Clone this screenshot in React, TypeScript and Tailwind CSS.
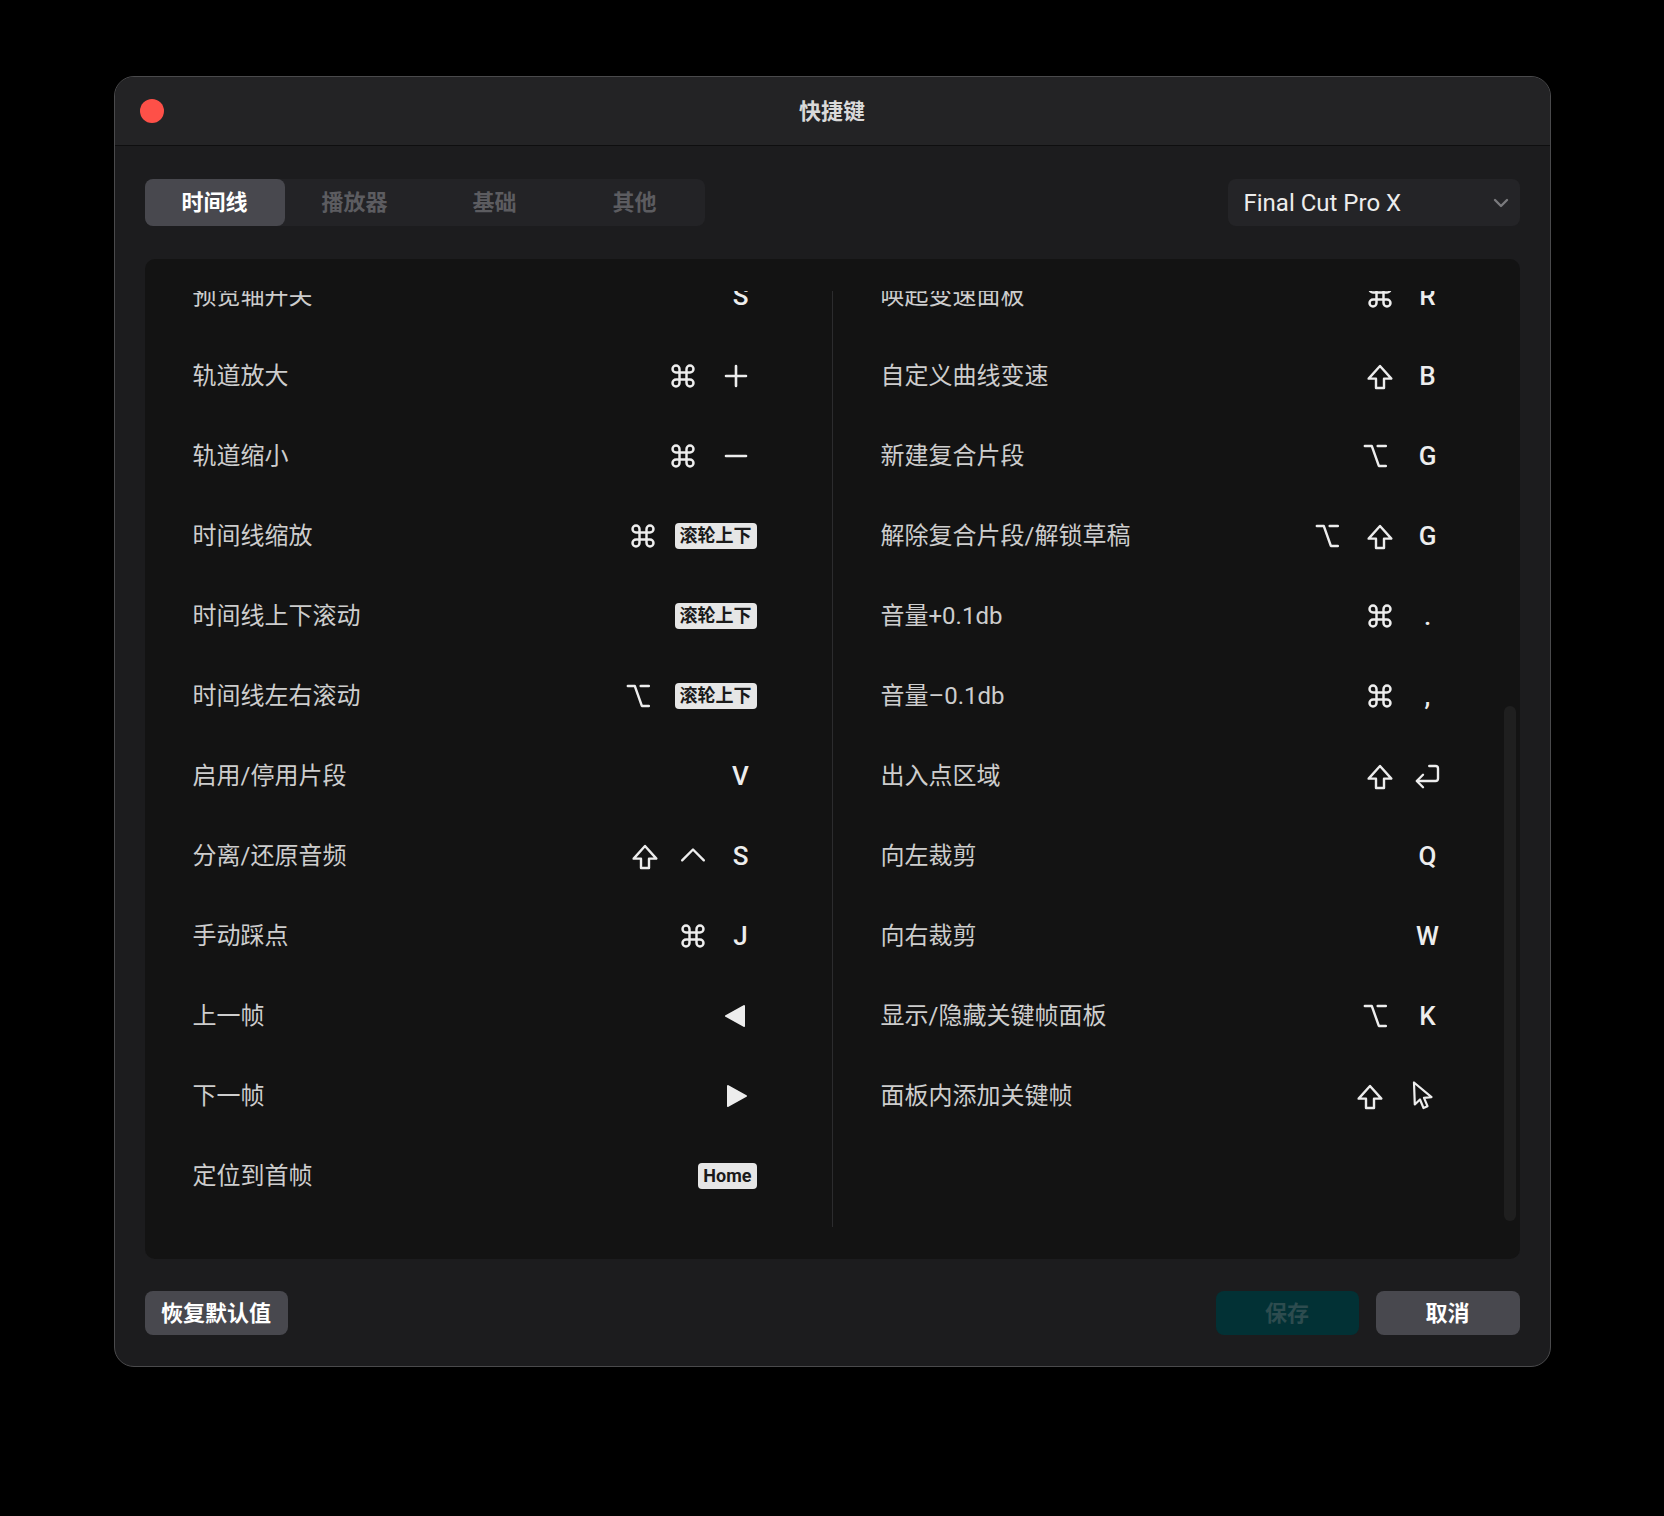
import React from 'react';

type Tok = string;

const svgBase = {
  fill: 'none',
  stroke: 'currentColor',
  strokeLinecap: 'round' as const,
  strokeLinejoin: 'round' as const,
};

function Glyph({ k }: { k: Tok }) {
  switch (k) {
    case 'cmd':
      return (
        <svg width="28" height="28" viewBox="0 0 24 24" {...svgBase} strokeWidth={2.1}>
          <path d="M15 6v12a3 3 0 1 0 3-3H6a3 3 0 1 0 3 3V6a3 3 0 1 0-3 3h12a3 3 0 1 0-3-3" />
        </svg>
      );
    case 'opt':
      return (
        <svg width="28" height="28" viewBox="4 0 24 24" className="overflow-visible" {...svgBase} strokeWidth={2.1}>
          <path d="M3 3.5h6l6 17h6" />
          <path d="M14 3.5h7" />
        </svg>
      );
    case 'shift':
      return (
        <svg width="32" height="32" viewBox="0 0 24 24" {...svgBase} strokeWidth={1.8}>
          <path d="M9 21v-7H3.5L12 4.5l8.5 9.5H15v7z" />
        </svg>
      );
    case 'ctrl':
      return (
        <svg width="26" height="26" viewBox="0 0 24 24" {...svgBase} strokeWidth={2.2}>
          <polyline points="2,16 12,6 22,16" />
        </svg>
      );
    case 'plus':
      return (
        <svg width="24" height="24" viewBox="0 0 24 24" {...svgBase} strokeWidth={2.6}>
          <path d="M12 2v20M2 12h20" />
        </svg>
      );
    case 'minus':
      return (
        <svg width="24" height="24" viewBox="0 0 24 24" {...svgBase} strokeWidth={2.6}>
          <path d="M2 12h20" />
        </svg>
      );
    case 'left':
      return (
        <svg width="24" height="24" viewBox="0 0 24 24" fill="currentColor" stroke="currentColor" strokeWidth={2} strokeLinejoin="round">
          <polygon points="20,2 2,12 20,22" />
        </svg>
      );
    case 'right':
      return (
        <svg width="24" height="24" viewBox="0 0 24 24" fill="currentColor" stroke="currentColor" strokeWidth={2} strokeLinejoin="round">
          <polygon points="4,2 22,12 4,22" />
        </svg>
      );
    case 'ret':
      return (
        <svg width="30" height="30" viewBox="0 0 24 24" {...svgBase} strokeWidth={1.9}>
          <path d="M13 4h5a2 2 0 0 1 2 2v8a2 2 0 0 1-2 2H3.5" />
          <path d="M8 11l-5 5 5 5" />
        </svg>
      );
    case 'cursor':
      return (
        <svg width="24" height="32" viewBox="0 0 24 32" {...svgBase} strokeWidth={2.2}>
          <path d="M3 2.5L3.8 24.5L9 19.5L12.5 28L16.5 26.2L13 17.8L20.5 17.2Z" />
        </svg>
      );
    default:
      return null;
  }
}

const wide = ['plus', 'minus', 'left', 'right', 'cursor'];
const symbols = ['cmd', 'opt', 'shift', 'ctrl', 'plus', 'minus', 'left', 'right', 'ret', 'cursor'];

function Key({ k }: { k: Tok }) {
  if (k.startsWith('badge:')) {
    const label = k.slice(6);
    return (
      <span className="flex h-[26px] items-center rounded-[4px] bg-[#e6e6e6] px-[5px] text-[18px] font-bold leading-none text-[#1a1a1a]">
        {label}
      </span>
    );
  }
  if (symbols.includes(k)) {
    return (
      <span
        className={
          wide.includes(k)
            ? 'flex h-[32px] w-[42px] items-center justify-center text-[#ededed]'
            : 'flex h-[32px] w-[32px] items-center justify-center text-[#ededed]'
        }
      >
        <Glyph k={k} />
      </span>
    );
  }
  return (
    <span className="flex h-[32px] w-[32px] items-center justify-center text-[26px] font-medium leading-none text-[#ededed]">
      {k}
    </span>
  );
}

function Row({ label, keys }: { label: string; keys: Tok[] }) {
  return (
    <div className="flex h-[80px] items-center justify-between">
      <span className="text-[24px] leading-none text-[#cdcdcd]">{label}</span>
      <div className="flex items-center gap-[16px]">
        {keys.map((k, i) => (
          <Key key={i} k={k} />
        ))}
      </div>
    </div>
  );
}

const leftRows: { label: string; keys: Tok[] }[] = [
  { label: '预览轴开关', keys: ['S'] },
  { label: '轨道放大', keys: ['cmd', 'plus'] },
  { label: '轨道缩小', keys: ['cmd', 'minus'] },
  { label: '时间线缩放', keys: ['cmd', 'badge:滚轮上下'] },
  { label: '时间线上下滚动', keys: ['badge:滚轮上下'] },
  { label: '时间线左右滚动', keys: ['opt', 'badge:滚轮上下'] },
  { label: '启用/停用片段', keys: ['V'] },
  { label: '分离/还原音频', keys: ['shift', 'ctrl', 'S'] },
  { label: '手动踩点', keys: ['cmd', 'J'] },
  { label: '上一帧', keys: ['left'] },
  { label: '下一帧', keys: ['right'] },
  { label: '定位到首帧', keys: ['badge:Home'] },
];

const rightRows: { label: string; keys: Tok[] }[] = [
  { label: '唤起变速面板', keys: ['cmd', 'R'] },
  { label: '自定义曲线变速', keys: ['shift', 'B'] },
  { label: '新建复合片段', keys: ['opt', 'G'] },
  { label: '解除复合片段/解锁草稿', keys: ['opt', 'shift', 'G'] },
  { label: '音量+0.1db', keys: ['cmd', '.'] },
  { label: '音量–0.1db', keys: ['cmd', ','] },
  { label: '出入点区域', keys: ['shift', 'ret'] },
  { label: '向左裁剪', keys: ['Q'] },
  { label: '向右裁剪', keys: ['W'] },
  { label: '显示/隐藏关键帧面板', keys: ['opt', 'K'] },
  { label: '面板内添加关键帧', keys: ['shift', 'cursor'] },
];

export default function App() {
  const tabs = ['时间线', '播放器', '基础', '其他'];
  return (
    <div className="min-h-[1516px] w-full bg-black pt-[76px] font-['Roboto','Noto_Sans_CJK_SC',sans-serif]">
      <div className="mx-auto w-[1437px] overflow-hidden rounded-[20px] border border-[#4a4a4c] bg-[#1c1c1e]">
        {/* title bar */}
        <div className="grid h-[69px] grid-cols-[1fr_auto_1fr] items-center border-b border-[#0e0e0f] bg-[#232325] px-[25px]">
          <div className="h-[24px] w-[24px] rounded-full bg-[#fe5048]" />
          <div className="text-[22px] font-bold text-[#d9d9d9]">快捷键</div>
          <div />
        </div>

        {/* body */}
        <div className="px-[30px] pb-[31px] pt-[33px]">
          <div className="flex items-center justify-between">
            <div className="flex h-[47px] w-[560px] rounded-[8px] bg-[#232326]">
              {tabs.map((t, i) => (
                <div
                  key={t}
                  className={
                    i === 0
                      ? 'flex flex-1 items-center justify-center rounded-[8px] bg-[#48484e] text-[22px] font-bold text-white'
                      : 'flex flex-1 items-center justify-center text-[22px] font-bold text-[#5c5c60]'
                  }
                >
                  {t}
                </div>
              ))}
            </div>
            <div className="flex h-[47px] w-[292px] items-center justify-between rounded-[8px] bg-[#242427] pl-[16px] pr-[11px]">
              <span className="text-[24px] leading-none text-[#ececec]">Final Cut Pro X</span>
              <svg width="16" height="10" viewBox="0 0 16 10" fill="none" stroke="#7a7a7d" strokeWidth={2.4} strokeLinecap="round" strokeLinejoin="round">
                <polyline points="2,2 8,8 14,2" />
              </svg>
            </div>
          </div>

          {/* panel */}
          <div className="relative mt-[33px] h-[1000px] rounded-[10px] bg-[#131313] py-[32px]">
            <div className="flex h-full">
              <div className="w-[687px] overflow-hidden pl-[48px] pr-[75px]">
                <div className="-mt-[35px]">
                  {leftRows.map((r) => (
                    <Row key={r.label} label={r.label} keys={r.keys} />
                  ))}
                </div>
              </div>
              <div className="w-px bg-[#2c2c2e]" />
              <div className="flex-1 overflow-hidden pl-[48px] pr-[76px]">
                <div className="-mt-[35px]">
                  {rightRows.map((r) => (
                    <Row key={r.label} label={r.label} keys={r.keys} />
                  ))}
                </div>
              </div>
            </div>
            <div className="absolute right-[4px] top-[447px] h-[515px] w-[12px] rounded-full bg-[#1f1f1f]" />
          </div>

          {/* footer buttons */}
          <div className="mt-[32px] flex items-center justify-between">
            <button className="flex h-[44px] w-[143px] items-center justify-center rounded-[8px] bg-[#48484e] text-[22px] font-bold text-white">
              恢复默认值
            </button>
            <div className="flex gap-[17px]">
              <button className="flex h-[44px] w-[143px] items-center justify-center rounded-[8px] bg-[#023135] text-[22px] font-bold text-[#2d4c4f]">
                保存
              </button>
              <button className="flex h-[44px] w-[144px] items-center justify-center rounded-[8px] bg-[#48484e] text-[22px] font-bold text-white">
                取消
              </button>
            </div>
          </div>
        </div>
      </div>
    </div>
  );
}
